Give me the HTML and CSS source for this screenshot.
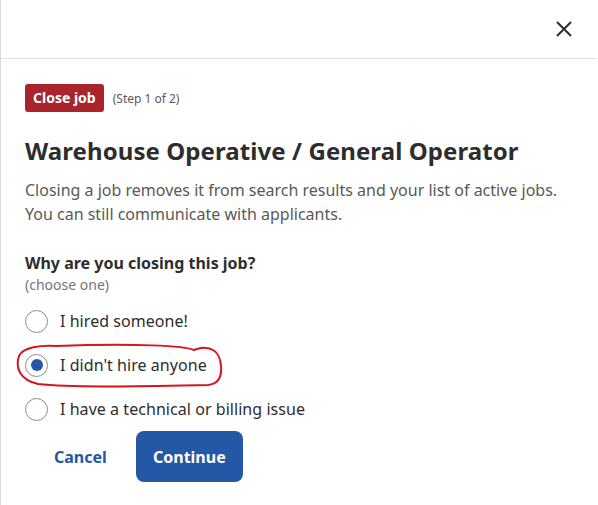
FILE: index.html
```html
<!DOCTYPE html>
<html>
<head>
<meta charset="utf-8">
<link rel="stylesheet" href="styles.css">
</head>
<body>
<div class="modal">
  <div class="header">
    <button class="close" aria-label="Close">
      <svg width="18" height="18" viewBox="0 0 18 18"><path d="M2 2L16 16M16 2L2 16" stroke="#2d2d2d" stroke-width="2" fill="none"/></svg>
    </button>
  </div>
  <div class="body">
    <div class="step-row">
      <span class="badge">Close job</span>
      <span class="step">(Step 1 of 2)</span>
    </div>
    <h1 class="title">Warehouse Operative / General Operator</h1>
    <p class="desc">Closing a job removes it from search results and your list of active jobs. You can still communicate with applicants.</p>
    <div class="question">Why are you closing this job?</div>
    <div class="hint">(choose one)</div>
    <div class="options">
      <label class="option"><span class="radio"></span><span>I hired someone!</span></label>
      <label class="option selected"><span class="radio"></span><span>I didn't hire anyone</span>
        <svg class="scribble" width="210" height="46" viewBox="0 0 210 46"><path d="M40 4 C 25 3, 7 5, 3 14 C -1 26, 4 38, 22 42 C 60 46, 130 44, 192 43 C 202 42, 206 35, 205 24 C 204 13, 200 7, 190 6 C 185 5, 182 7, 178 8 C 170 4, 120 1, 40 4 Z" stroke="#d5141c" stroke-width="2" fill="none"/></svg>
      </label>
      <label class="option"><span class="radio"></span><span>I have a technical or billing issue</span></label>
    </div>
    <div class="actions">
      <button class="cancel">Cancel</button>
      <button class="continue">Continue</button>
    </div>
  </div>
</div>
</body>
</html>
```
FILE: styles.css
```css
html, body {
  margin: 0;
  padding: 0;
  background: #fff;
}
body {
  font-family: "Noto Sans", "Open Sans", sans-serif;
  color: #2d2d2d;
}
.modal {
  width: 597px;
  height: 505px;
  border-left: 1px solid #dcdcdc;
  box-sizing: border-box;
}
.header {
  height: 58px;
  border-bottom: 1px solid #e4e2e0;
  display: flex;
  justify-content: flex-end;
  align-items: center;
  padding-right: 24px;
}
.close {
  background: none;
  border: 0;
  padding: 0;
  width: 18px;
  height: 18px;
  display: flex;
  margin-top: -1px;
}
.body {
  padding: 25px 24px 0 24px;
}
.step-row {
  display: flex;
  align-items: center;
  gap: 9px;
}
.badge {
  background: #a9252b;
  color: #fff;
  font-weight: 700;
  font-size: 14px;
  height: 28px;
  line-height: 28px;
  padding: 0 8px;
  border-radius: 3px;
}
.step {
  font-size: 12px;
  color: #595959;
}
.title {
  font-size: 24px;
  font-weight: 700;
  margin: 23px 0 0 0;
  line-height: 32px;
  color: #2d2d2d;
  letter-spacing: 0.08px;
}
.desc {
  font-size: 16px;
  line-height: 24px;
  margin: 11px 0 0 0;
  color: #595959;
}
.question {
  margin-top: 25px;
  font-size: 16px;
  font-weight: 700;
  line-height: 24px;
}
.hint {
  font-size: 14px;
  color: #767676;
  line-height: 20px;
}
.options {
  margin-top: 14px;
  display: flex;
  flex-direction: column;
  gap: 20px;
}
.option {
  display: flex;
  align-items: center;
  gap: 12px;
  font-size: 16px;
  line-height: 24px;
  color: #2d2d2d;
  position: relative;
  letter-spacing: 0.05px;
}
.radio {
  width: 23px;
  height: 23px;
  border: 1px solid #8c8c8c;
  border-radius: 50%;
  box-sizing: border-box;
  display: flex;
  align-items: center;
  justify-content: center;
  flex: none;
}
.selected .radio::after {
  content: "";
  width: 12px;
  height: 12px;
  border-radius: 50%;
  background: #2557a7;
}
.scribble {
  position: absolute;
  left: -9px;
  top: -11px;
}
.actions {
  margin-top: 10px;
  display: flex;
  align-items: center;
  gap: 12px;
  padding-left: 12px;
}
.cancel {
  background: none;
  border: 0;
  font-family: inherit;
  font-size: 16px;
  font-weight: 700;
  color: #2557a7;
  padding: 0 17px;
  height: 51px;
}
.continue {
  background: #2557a7;
  border: 0;
  border-radius: 8px;
  font-family: inherit;
  font-size: 16px;
  font-weight: 700;
  color: #fff;
  height: 51px;
  width: 107px;
}
```
